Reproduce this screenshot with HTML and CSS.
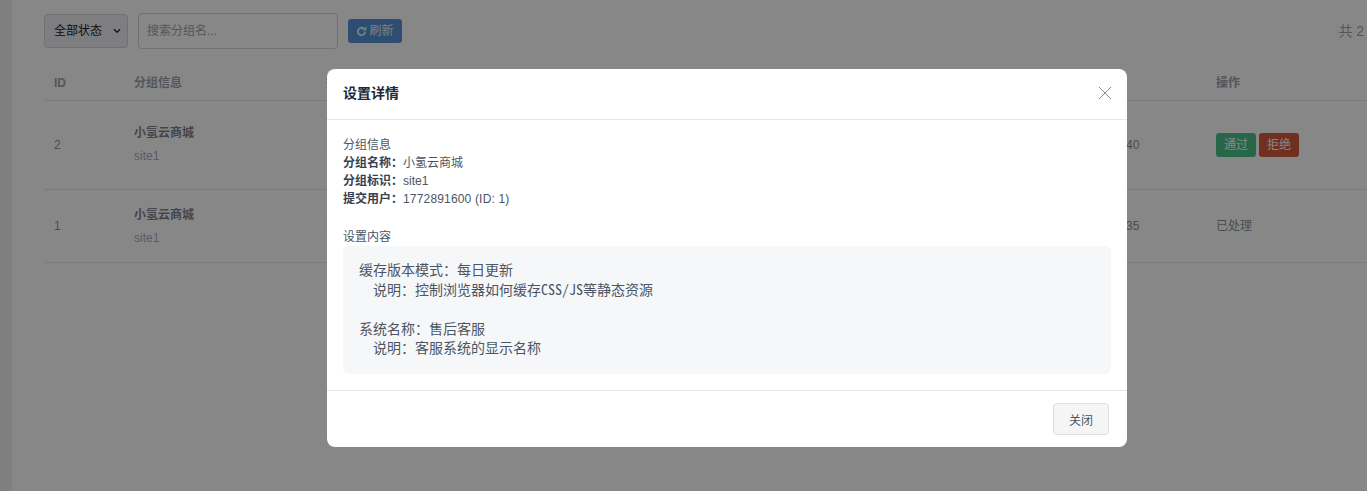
FILE: index.html
```html
<!DOCTYPE html>
<html lang="zh-CN">
<head>
<meta charset="utf-8">
<title>设置审核</title>
<link rel="stylesheet" href="styles.css">
</head>
<body>
<div class="page">
  <aside class="rail"></aside>
  <main class="main">
    <div class="toolbar">
      <div class="select-wrap">
        <select class="status"><option>全部状态</option></select>
        <svg class="chevron" viewBox="0 0 8 6" width="8" height="6"><path d="M1 1.2l3 3 3-3" fill="none" stroke="#2b2b2b" stroke-width="1.4"/></svg>
      </div>
      <input class="search" type="text" placeholder="搜索分组名...">
      <button class="btn btn-refresh" type="button">
        <svg class="refresh-icon" viewBox="0 0 12 12" width="11" height="11"><path d="M10 6a4 4 0 1 1-1.2-2.9" fill="none" stroke="currentColor" stroke-width="2"/><path d="M7 4.6h4.4V.4z" fill="currentColor"/></svg>刷新
      </button>
      <span class="total">共 2 条记录</span>
    </div>
    <table class="table">
      <colgroup><col class="c-id"><col class="c-group"><col class="c-user"><col class="c-time"><col class="c-action"></colgroup>
      <thead>
        <tr><th>ID</th><th>分组信息</th><th>提交用户</th><th>提交时间</th><th>操作</th></tr>
      </thead>
      <tbody>
        <tr class="row-tall">
          <td>2</td>
          <td><div class="name">小氢云商城</div><div class="code">site1</div></td>
          <td>1772891600</td>
          <td class="time">2026-03-07 22:00:40</td>
          <td><button class="btn btn-pass" type="button">通过</button><button class="btn btn-reject" type="button">拒绝</button></td>
        </tr>
        <tr class="row-short">
          <td>1</td>
          <td><div class="name">小氢云商城</div><div class="code">site1</div></td>
          <td>1772891600</td>
          <td class="time">2026-03-07 21:58:35</td>
          <td>已处理</td>
        </tr>
      </tbody>
    </table>
  </main>
  <div class="backdrop">
    <section class="modal">
      <header class="modal-head">
        <h2 class="modal-title">设置详情</h2>
        <svg class="close" viewBox="0 0 14 14" width="14" height="14"><path d="M1 1l12 12M13 1L1 13" fill="none" stroke="#8a8a8a" stroke-width="1"/></svg>
      </header>
      <div class="modal-body">
        <div class="section-label">分组信息</div>
        <div class="info"><b>分组名称：</b>小氢云商城</div>
        <div class="info"><b>分组标识：</b>site1</div>
        <div class="info"><b>提交用户：</b><span class="num">1772891600 (ID: 1)</span></div>
        <div class="section-label second">设置内容</div>
        <pre class="content">缓存版本模式：每日更新
  说明：控制浏览器如何缓存CSS/JS等静态资源

系统名称：售后客服
  说明：客服系统的显示名称</pre>
      </div>
      <footer class="modal-foot">
        <button class="btn-close" type="button">关闭</button>
      </footer>
    </section>
  </div>
</div>
</body>
</html>
```
FILE: styles.css
```css
* { box-sizing: border-box; }
html, body { margin: 0; height: 100%; overflow: hidden; }
body {
  background: #fff;
  font-family: "Liberation Sans", "Noto Sans CJK SC", sans-serif;
  font-size: 12px;
  line-height: 18px;
  color: #4b5563;
}
.page { position: relative; display: flex; width: 1454px; height: 491px; }
.rail { width: 12px; flex: none; background: #f0f0f0; }
.main { flex: 1; min-width: 0; padding: 13px 44px 0 32px; }

.toolbar { display: flex; align-items: center; gap: 10px; height: 36px; }
.select-wrap { position: relative; width: 84px; height: 34px; }
.chevron { position: absolute; left: 69px; top: 14px; pointer-events: none; }
.status {
  appearance: none; display: block;
  width: 84px; height: 34px; padding: 0 4px 0 9px;
  border: 1px solid #d1d5db; border-radius: 4px;
  background: #eeeff2; color: #111827;
  font: 12px "Liberation Sans", "Noto Sans CJK SC", sans-serif;
}
.search {
  width: 200px; height: 36px; padding: 0 8px;
  border: 1px solid #d1d5db; border-radius: 4px;
  background: #fff; font: 12px "Liberation Sans", "Noto Sans CJK SC", sans-serif;
  color: #111827;
}
.search::placeholder { color: #9ca3af; opacity: 1; }
.btn {
  display: inline-flex; align-items: center; justify-content: center;
  height: 24px; padding: 0 8px; border: 0; border-radius: 3px;
  color: #fff; font: 12px/18px "Liberation Sans", "Noto Sans CJK SC", sans-serif;
}
.btn-refresh { width: 54px; background: #5594d6; padding: 0; color: #e6f0fb; }
.refresh-icon { margin-right: 2px; }
.total { margin-left: auto; font-size: 14px; color: #9ca3af; white-space: nowrap; }

.table { width: 100%; margin-top: 18px; border-collapse: collapse; table-layout: fixed; }
.c-id { width: 80px; }
.c-group { width: 192px; }
.c-user { width: 702px; }
.c-time { width: 188px; }
.c-action { width: 204px; }
.table th {
  height: 33px; padding: 0 10px; text-align: left; font-weight: 700;
  color: #9ca3af; border-bottom: 1px solid #e5e7eb;
}
.table td { padding: 0 10px; border-bottom: 1px solid #e5e7eb; color: #8b929c; vertical-align: middle; }
.row-tall td { height: 89px; }
.row-short td { height: 73px; }
.name { font-weight: 700; color: #7d8590; }
.code { margin-top: 5px; color: #a8aeb8; }
.row-short .name { padding-top: 1px; }
.time { white-space: nowrap; }
.btn-pass { width: 40px; background: #4cc08a; padding: 0; margin-right: 3px; }
.btn-reject { width: 40px; background: #d45c3d; padding: 0; }

.backdrop {
  position: absolute; inset: 0; background: rgba(0, 0, 0, .47);
  display: flex; justify-content: center; align-items: flex-start; padding-top: 69px;
}
.modal { width: 800px; height: 378px; background: #fff; border-radius: 8px; display: flex; flex-direction: column; }
.modal-head {
  height: 51px; flex: none; display: flex; align-items: center; justify-content: space-between;
  padding: 0 15px 3px 16px; border-bottom: 1px solid #e5e7eb;
}
.modal-title { margin: 0; font-size: 14px; line-height: 20px; color: #1f2937; font-weight: 700; }
.close { display: block; }
.modal-body { flex: 1; padding: 16px 16px 0; }
.section-label { color: #4b5563; }
.section-label.second { margin-top: 20px; }
.info { color: #4b5563; }
.info b { font-weight: 700; color: #374151; }
.num { letter-spacing: .17px; }
.content {
  margin: 0; height: 128px; padding: 14px 16px; border-radius: 6px;
  background: #f6f7f9; color: #4b5563;
  font-family: "Noto Sans Mono CJK SC", "Noto Sans CJK SC", monospace;
  font-size: 14px; line-height: 19.6px;
}
.modal-foot {
  height: 57px; flex: none; display: flex; align-items: center; justify-content: flex-end;
  padding: 0 18px 0 0; border-top: 1px solid #e5e7eb;
}
.btn-close {
  width: 56px; height: 32px; border: 1px solid #e0e0e0; border-radius: 4px; background: #f5f5f5;
  color: #4b5563; font: 12px "Liberation Sans", "Noto Sans CJK SC", sans-serif;
}
```
